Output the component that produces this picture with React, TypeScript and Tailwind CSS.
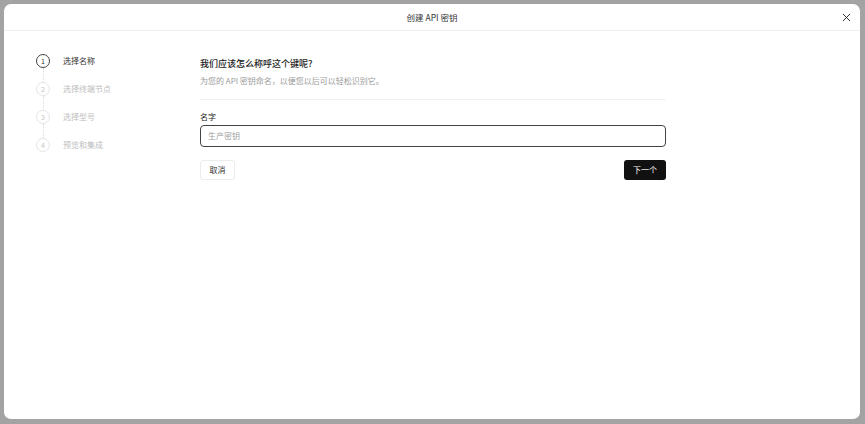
import React from "react";

const steps = ["选择名称", "选择终端节点", "选择型号", "预览和集成"];

export default function App() {
  return (
    <div
      className="w-[865px] h-[424px] bg-[#a3a3a3] p-[4px] pr-[5px] pb-[5px]"
      style={{ fontFamily: '"Noto Sans CJK SC", "Noto Sans", sans-serif' }}
    >
      <div className="w-full h-full bg-white rounded-[7px] flex flex-col overflow-hidden">
        <div className="h-[27px] shrink-0 border-b border-[#f0f0f0] flex items-center justify-center relative">
          <span className="text-[8.5px] text-[#333] leading-none">创建 API 密钥</span>
          <svg
            className="absolute right-[9px] top-[9px]"
            width="9"
            height="9"
            viewBox="0 0 10 10"
            fill="none"
            stroke="#333"
            strokeWidth="1.1"
          >
            <path d="M1 1L9 9M9 1L1 9" />
          </svg>
        </div>
        <div className="flex flex-1">
          <div className="w-[196px] shrink-0 pl-[32px] pt-[23px]">
            {steps.map((s, i) => (
              <div key={s} className="flex flex-col">
                <div className="flex items-center h-[14px]">
                  <div
                    className={
                      i === 0
                        ? "w-[14px] h-[14px] rounded-full border border-[#444] flex items-center justify-center text-[7px] text-[#333] leading-none"
                        : "w-[14px] h-[14px] rounded-full border border-[#e6e6e6] flex items-center justify-center text-[7px] text-[#c4c4c4] leading-none"
                    }
                  >
                    {i + 1}
                  </div>
                  <span
                    className={
                      i === 0
                        ? "ml-[13px] text-[8px] text-[#333] leading-none"
                        : "ml-[13px] text-[8px] text-[#bdbdbd] leading-none"
                    }
                  >
                    {s}
                  </span>
                </div>
                {i < steps.length - 1 && (
                  <div className="h-[14px] ml-[6.5px] border-l border-dotted border-[#dcdcdc]" />
                )}
              </div>
            ))}
          </div>
          <div className="w-[466px] pt-[27px]">
            <div className="text-[9px] text-[#222] leading-[12px] font-medium">我们应该怎么称呼这个键呢?</div>
            <div className="mt-[5px] text-[8px] text-[#9a9a9a] leading-[11px]">
              为您的 API 密钥命名，以便您以后可以轻松识别它。
            </div>
            <div className="mt-[13px] border-t border-[#f0f0f0]" />
            <div className="mt-[11px] text-[8px] text-[#222] leading-[11px]">名字</div>
            <div className="mt-[3px] h-[22px] rounded-[4px] border border-[#444] flex items-center px-[7px]">
              <span className="text-[8px] text-[#9e9e9e] leading-none">生产密钥</span>
            </div>
            <div className="mt-[13px] flex justify-between">
              <div className="h-[20px] w-[35px] rounded-[3px] border border-[#ececec] flex items-center justify-center text-[8px] text-[#333] leading-none">
                取消
              </div>
              <div className="h-[20px] w-[42px] rounded-[3px] bg-[#111111] flex items-center justify-center text-[8px] text-white leading-none">
                下一个
              </div>
            </div>
          </div>
        </div>
      </div>
    </div>
  );
}
